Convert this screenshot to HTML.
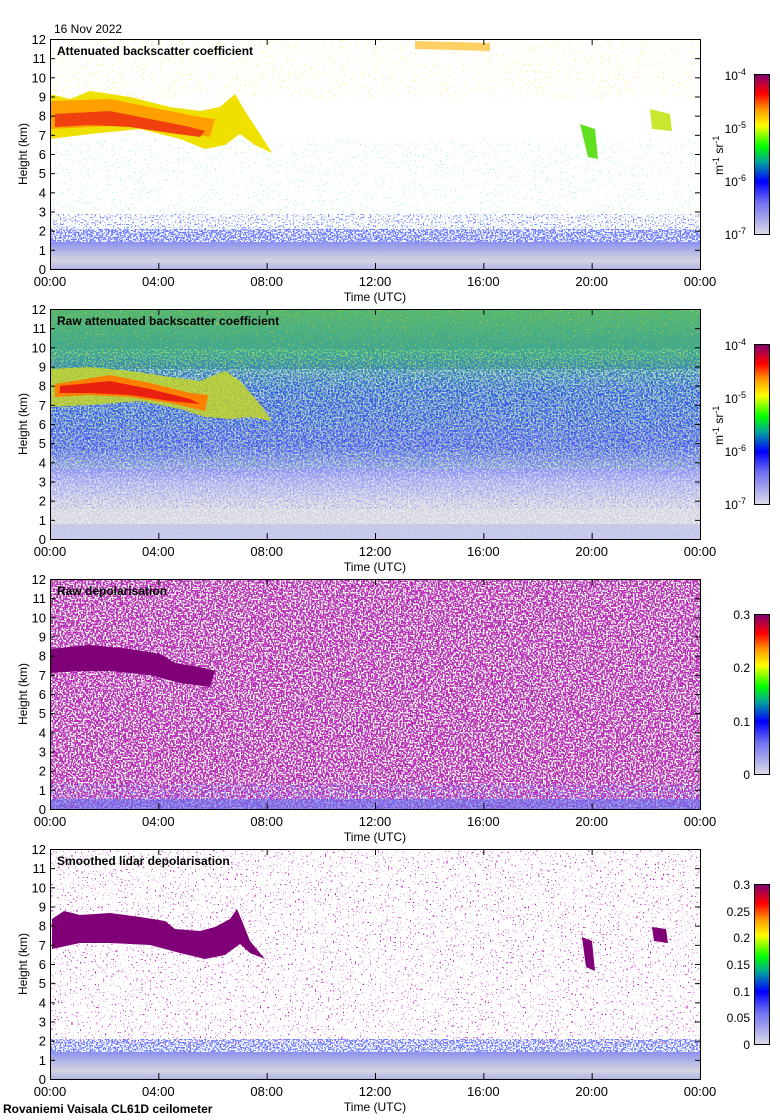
<!DOCTYPE html>
<html><head><meta charset="utf-8"><style>
html,body{margin:0;padding:0;background:#fff;}
svg{display:block;font-family:"Liberation Sans",sans-serif;}
</style></head><body>
<svg width="780" height="1120" viewBox="0 0 780 1120" xmlns="http://www.w3.org/2000/svg">
<defs>
<filter id="f" x="0" y="0" width="1" height="1"><feTurbulence type="fractalNoise" baseFrequency="0.6" numOctaves="1" seed="3"/><feColorMatrix type="matrix" values="0 0 0 0 0.5  0 0 0 0 0.02  0 0 0 0 0.5  40 0 0 0 -18"/></filter>
<filter id="fb" x="0" y="0" width="1" height="1"><feTurbulence type="fractalNoise" baseFrequency="0.6" numOctaves="1" seed="7"/><feColorMatrix type="matrix" values="0 0 0 0 0.15  0 0 0 0 0.2  0 0 0 0 1  40 0 0 0 -20"/></filter>
<filter id="fbl" x="0" y="0" width="1" height="1"><feTurbulence type="fractalNoise" baseFrequency="0.6" numOctaves="1" seed="11"/><feColorMatrix type="matrix" values="0 0 0 0 0.2  0 0 0 0 0.25  0 0 0 0 1  40 0 0 0 -24"/></filter>
<filter id="fg" x="0" y="0" width="1" height="1"><feTurbulence type="fractalNoise" baseFrequency="0.6" numOctaves="1" seed="13"/><feColorMatrix type="matrix" values="0 0 0 0 0.1  0 0 0 0 0.85  0 0 0 0 0.3  40 0 0 0 -27"/></filter>
<filter id="fy" x="0" y="0" width="1" height="1"><feTurbulence type="fractalNoise" baseFrequency="0.6" numOctaves="1" seed="17"/><feColorMatrix type="matrix" values="0 0 0 0 1  0 0 0 0 0.7  0 0 0 0 0  40 0 0 0 -27"/></filter>
<filter id="fw" x="0" y="0" width="1" height="1"><feTurbulence type="fractalNoise" baseFrequency="0.6" numOctaves="1" seed="19"/><feColorMatrix type="matrix" values="0 0 0 0 1  0 0 0 0 1  0 0 0 0 1  40 0 0 0 -21"/></filter>
<filter id="fgn" x="0" y="0" width="1" height="1"><feTurbulence type="fractalNoise" baseFrequency="0.6" numOctaves="1" seed="23"/><feColorMatrix type="matrix" values="0 0 0 0 0.3  0 0 0 0 0.8  0 0 0 0 0.2  40 0 0 0 -22"/></filter>
<filter id="fp2" x="0" y="0" width="1" height="1"><feTurbulence type="fractalNoise" baseFrequency="0.6" numOctaves="1" seed="29"/><feColorMatrix type="matrix" values="0 0 0 0 0.5  0 0 0 0 0  0 0 0 0 0.5  40 0 0 0 -27"/></filter>
<linearGradient id="cb" x1="0" y1="1" x2="0" y2="0">
<stop offset="0" stop-color="#dcdce8"/><stop offset="0.2" stop-color="#7070f0"/><stop offset="0.33" stop-color="#0000ff"/><stop offset="0.45" stop-color="#00a0a0"/><stop offset="0.55" stop-color="#00ff00"/><stop offset="0.68" stop-color="#ffff00"/><stop offset="0.78" stop-color="#ff9900"/><stop offset="0.88" stop-color="#ff0000"/><stop offset="1" stop-color="#800070"/>
</linearGradient>
<linearGradient id="bg2" x1="0" y1="0" x2="0" y2="1">
<stop offset="0" stop-color="#58b870"/><stop offset="0.18" stop-color="#40a890"/><stop offset="0.35" stop-color="#3060e0"/><stop offset="0.6" stop-color="#4858f0"/><stop offset="0.75" stop-color="#b0b2ec"/><stop offset="0.85" stop-color="#d4d4e0"/><stop offset="1" stop-color="#d8d8de"/>
</linearGradient>
<linearGradient id="low" x1="0" y1="0" x2="0" y2="1">
<stop offset="0" stop-color="#8c90f0"/><stop offset="0.4" stop-color="#b8bae4"/><stop offset="0.7" stop-color="#d4d4e0"/><stop offset="1" stop-color="#b0b4e6"/>
</linearGradient>
</defs>

<text x="54" y="33" font-size="12">16 Nov 2022</text>

<!-- PANEL 1 -->
<g transform="translate(50,39)">
<rect width="650" height="230" fill="#fff"/>
<rect y="0" width="650" height="60" filter="url(#fy)" opacity="0.5"/>
<rect y="100" width="650" height="90" filter="url(#fg)" opacity="0.5"/>
<rect y="175" width="650" height="30" filter="url(#fbl)"/>
<rect y="190" width="650" height="20" filter="url(#fb)"/>
<rect y="203" width="650" height="27" fill="url(#low)"/>
<path d="M0,55 L20,60 L40,52 L80,58 L120,68 L150,72 L170,68 L185,55 L195,72 L210,95 L222,114 L205,106 L190,95 L175,106 L155,110 L130,100 L90,90 L40,95 L0,100 Z" fill="#f0e000"/>
<path d="M0,62 L60,60 L110,70 L150,78 L165,80 L160,98 L130,92 L80,86 L40,88 L0,90 Z" fill="#ffa000"/>
<path d="M5,75 L60,72 L100,80 L140,88 L155,92 L150,98 L120,94 L80,88 L40,86 L5,88 Z" fill="#f04010"/>
<path d="M365,2 L440,4 L440,12 L365,10Z" fill="#ffb000" opacity="0.6"/>
<path d="M530,85 L545,90 L548,120 L538,118Z" fill="#60e020"/>
<path d="M600,70 L620,75 L622,92 L602,90Z" fill="#c8e830"/>
<text x="7" y="16" font-size="12" font-weight="bold">Attenuated backscatter coefficient</text>
</g>

<!-- PANEL 2 -->
<g transform="translate(50,309)">
<rect width="650" height="230" fill="url(#bg2)"/>
<rect width="650" height="60" filter="url(#fy)" opacity="0.6"/>
<rect y="40" width="650" height="120" filter="url(#fgn)" opacity="0.7"/>
<rect y="60" width="650" height="170" filter="url(#fw)" opacity="0.55"/>
<rect y="120" width="650" height="80" filter="url(#fbl)" opacity="0.6"/>
<rect y="215" width="650" height="15" fill="#b8bcec" opacity="0.6"/>
<path d="M0,60 L40,58 L80,62 L120,68 L150,72 L175,62 L190,72 L210,95 L222,112 L200,108 L180,110 L155,108 L130,100 L90,92 L40,96 L0,98 Z" fill="#c8d820" opacity="0.8"/>
<path d="M5,75 L60,66 L100,74 L140,84 L158,86 L155,102 L120,94 L80,88 L40,86 L5,88 Z" fill="#ff8000"/>
<path d="M10,77 L60,72 L100,80 L140,90 L150,95 L120,92 L80,86 L40,84 L10,84 Z" fill="#e82010"/>
<text x="7" y="16" font-size="12" font-weight="bold">Raw attenuated backscatter coefficient</text>
</g>

<!-- PANEL 3 -->
<g transform="translate(50,579)">
<rect width="650" height="230" fill="#fff"/>
<rect width="650" height="230" filter="url(#f)"/>
<rect width="650" height="230" filter="url(#fgn)" opacity="0.25"/>
<rect y="205" width="650" height="25" filter="url(#fbl)"/>
<rect y="220" width="650" height="10" fill="#6870f0" opacity="0.6"/>
<path d="M0,70 L40,66 L80,70 L110,75 L125,84 L150,88 L165,92 L160,108 L130,104 L100,96 L60,92 L30,92 L0,94 Z" fill="#800078"/>
<text x="7" y="16" font-size="12" font-weight="bold">Raw depolarisation</text>
</g>

<!-- PANEL 4 -->
<g transform="translate(50,849)">
<rect width="650" height="230" fill="#fff"/>
<rect width="650" height="195" filter="url(#fp2)"/>
<rect y="190" width="650" height="20" filter="url(#fb)"/>
<rect y="203" width="650" height="27" fill="url(#low)"/>
<path d="M2,70 L14,62 L30,66 L60,64 L90,68 L115,72 L125,80 L150,82 L165,78 L180,70 L187,60 L192,72 L200,92 L215,110 L200,104 L190,95 L175,106 L155,110 L130,104 L100,96 L60,94 L30,94 L2,100 Z" fill="#800078"/>
<path d="M532,88 L542,92 L545,122 L536,118Z" fill="#800078"/>
<path d="M602,78 L616,80 L618,94 L604,92Z" fill="#800078"/>
<text x="7" y="16" font-size="12" font-weight="bold">Smoothed lidar depolarisation</text>
</g>

<!-- AXES -->
<g fill="none" stroke="#000" stroke-width="1">
<rect x="50.5" y="39.5" width="650" height="230"/>
<rect x="50.5" y="309.5" width="650" height="230"/>
<rect x="50.5" y="579.5" width="650" height="230"/>
<rect x="50.5" y="849.5" width="650" height="230"/>
</g>
<script>
(function(){
var ns="http://www.w3.org/2000/svg",svg=document.querySelector('svg');
var tops=[39,309,579,849];
var times=["00:00","04:00","08:00","12:00","16:00","20:00","00:00"];
function el(n,a,t){var e=document.createElementNS(ns,n);for(var k in a)e.setAttribute(k,a[k]);if(t!=null)e.textContent=t;svg.appendChild(e);return e;}
tops.forEach(function(T){
 for(var k=0;k<=12;k++){var y=T+230-k*230/12;
  el('line',{x1:50,x2:55,y1:y+0.5,y2:y+0.5,stroke:'#000'});
  el('line',{x1:695,x2:700,y1:y+0.5,y2:y+0.5,stroke:'#000'});
  el('text',{x:46,y:y+5,'font-size':13,'text-anchor':'end'},String(k));}
 for(var i=0;i<=6;i++){var x=50+i*650/6;
  el('line',{x1:x+0.5,x2:x+0.5,y1:T+230,y2:T+224,stroke:'#000'});
  el('line',{x1:x+0.5,x2:x+0.5,y1:T,y2:T+6,stroke:'#000'});
  el('text',{x:x,y:T+247,'font-size':13,'text-anchor':'middle'},times[i]);}
 el('text',{x:375,y:T+262,'font-size':12,'text-anchor':'middle'},'Time (UTC)');
 el('text',{x:0,y:0,'font-size':12,'text-anchor':'middle',transform:'translate(27,'+(T+115)+') rotate(-90)'},'Height (km)');
});
})();
</script>

<!-- COLORBARS -->
<rect x="754.5" y="74.5" width="15" height="160" fill="url(#cb)" stroke="#000"/>
<rect x="754.5" y="344.5" width="15" height="160" fill="url(#cb)" stroke="#000"/>
<rect x="754.5" y="614.5" width="15" height="160" fill="url(#cb)" stroke="#000"/>
<rect x="754.5" y="884.5" width="15" height="160" fill="url(#cb)" stroke="#000"/>
<g font-size="12" text-anchor="end">
<text x="746" y="80">10<tspan dy="-5" font-size="9">-4</tspan></text>
<text x="746" y="133">10<tspan dy="-5" font-size="9">-5</tspan></text>
<text x="746" y="186">10<tspan dy="-5" font-size="9">-6</tspan></text>
<text x="746" y="239">10<tspan dy="-5" font-size="9">-7</tspan></text>
<text x="746" y="350">10<tspan dy="-5" font-size="9">-4</tspan></text>
<text x="746" y="403">10<tspan dy="-5" font-size="9">-5</tspan></text>
<text x="746" y="456">10<tspan dy="-5" font-size="9">-6</tspan></text>
<text x="746" y="509">10<tspan dy="-5" font-size="9">-7</tspan></text>
<text x="750" y="619">0.3</text><text x="750" y="672">0.2</text><text x="750" y="726">0.1</text><text x="750" y="779">0</text>
<text x="750" y="889">0.3</text><text x="750" y="916">0.25</text><text x="750" y="942">0.2</text><text x="750" y="969">0.15</text><text x="750" y="996">0.1</text><text x="750" y="1022">0.05</text><text x="750" y="1049">0</text>
</g>
<text font-size="12" transform="translate(723,175) rotate(-90)">m<tspan dy="-4" font-size="9">-1</tspan><tspan dy="4"> sr</tspan><tspan dy="-4" font-size="9">-1</tspan></text>
<text font-size="12" transform="translate(723,445) rotate(-90)">m<tspan dy="-4" font-size="9">-1</tspan><tspan dy="4"> sr</tspan><tspan dy="-4" font-size="9">-1</tspan></text>

<text x="3" y="1113" font-size="12" font-weight="bold">Rovaniemi Vaisala CL61D ceilometer</text>
</svg>
</body></html>
